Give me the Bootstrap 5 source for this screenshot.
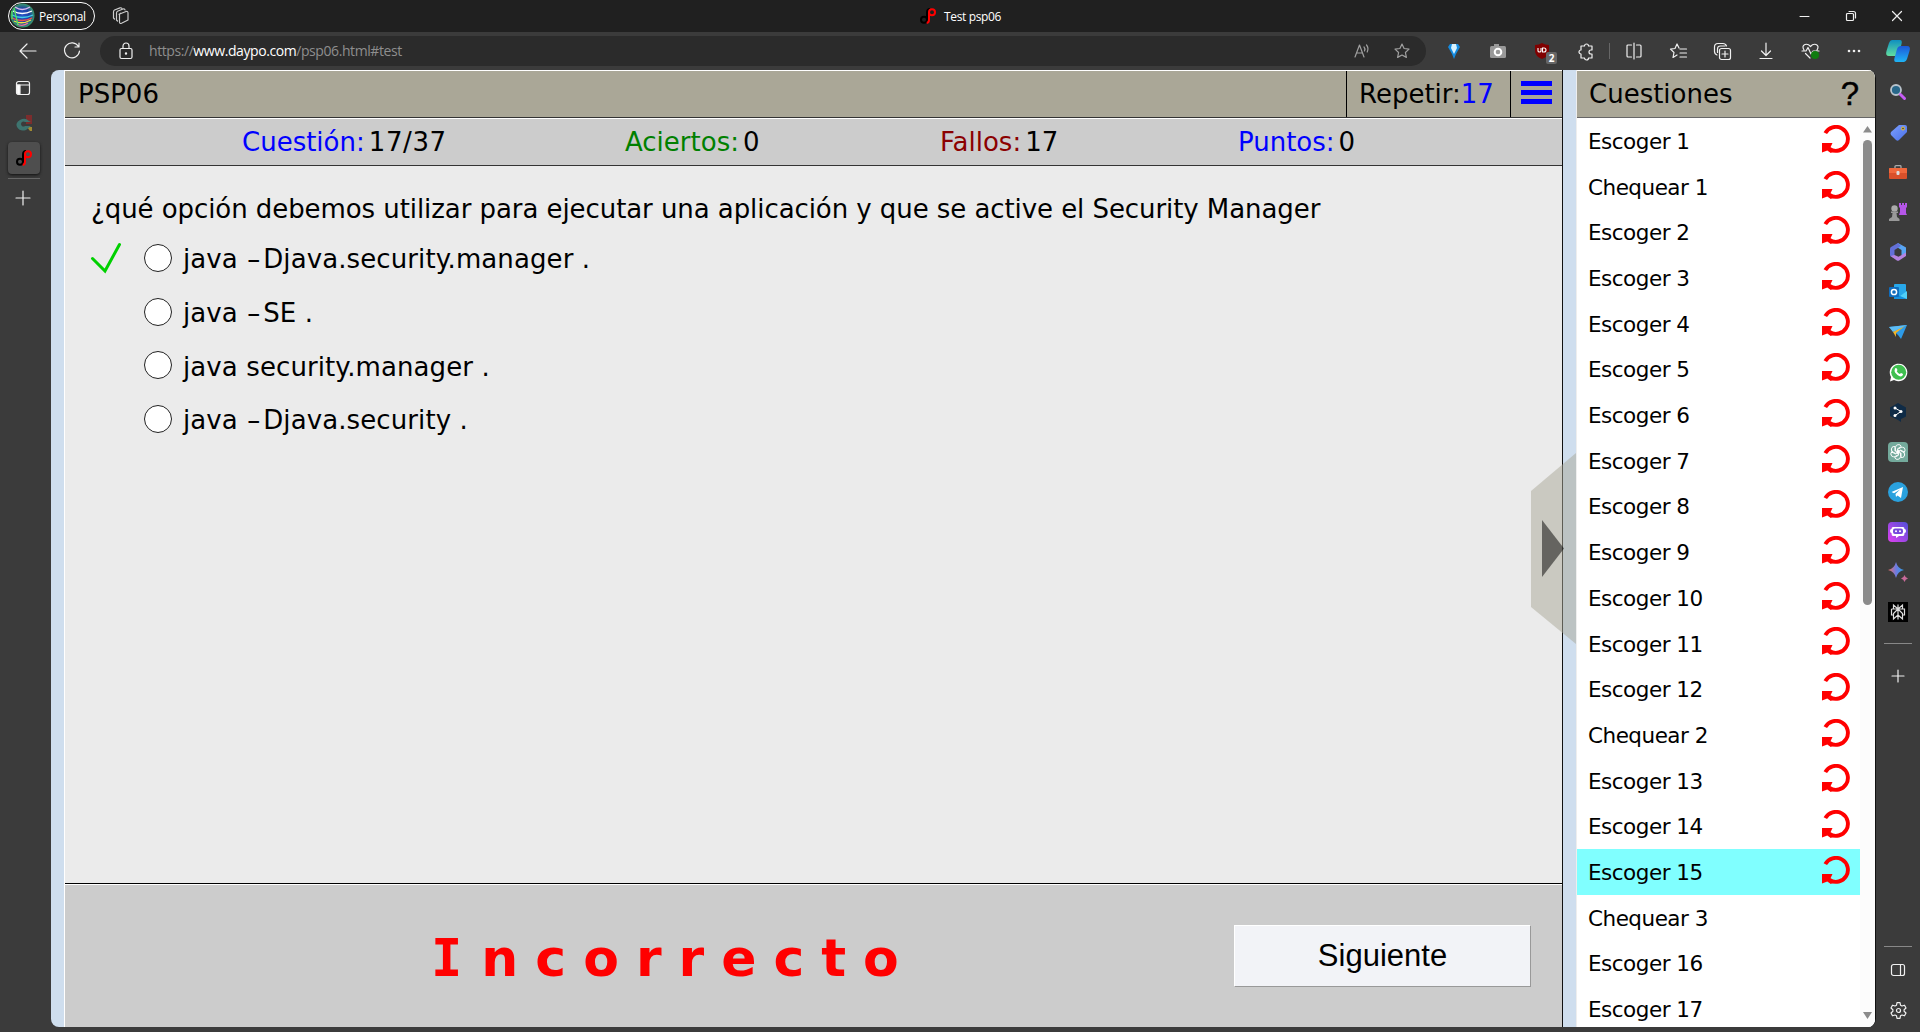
<!DOCTYPE html>
<html lang="es">
<head>
<meta charset="utf-8">
<title>Test psp06</title>
<link href="https://cdn.jsdelivr.net/npm/bootstrap@5.3.0/dist/css/bootstrap.min.css" rel="stylesheet">
<style>
html,body{height:100%}
body{background:#3b3b3b;overflow:hidden;font-family:"Open Sans","Noto Sans",sans-serif;color:#fff;line-height:1.2}
svg{display:block;flex:none;overflow:visible}
.ln{fill:none;stroke:#f0f0f0;stroke-width:1.2;stroke-linecap:round;stroke-linejoin:round}
.dim{stroke:#a0a0a0}
.titlebar{height:32px;background:#202020}
.pill{width:87px;height:28px;border:1px solid #fff;border-radius:14px;font-size:12px;letter-spacing:-.25px;margin:-1px 0 0 8px;padding-left:1px}
.tabname{font-size:12px;letter-spacing:-.35px;left:920px;top:8px;height:16px;gap:8px}
.tabname span{padding-top:2px}
.winbtn{width:46px;height:32px}
.toolbar{height:38px;padding-left:6px}
.slot{width:44px;height:38px}
.omni{width:1327px;height:30px;border-radius:15px;background:#2b2b2b;font-size:14px;margin-left:6px;padding-left:17px}
.omni .url{color:#8e8e8e;margin-left:14px;letter-spacing:-.42px}
.omni .url span{color:#fff}
.vsep{width:1px;height:16px;background:#666;margin:0 2px 0 1px}
.count{left:26px;top:20px;font-size:10px;font-weight:700;line-height:12px;background:#666;border-radius:2px;padding:0 2.500px}
.lefttabs{width:51px}
.lefttabs>div{width:32px;height:36px;margin-left:7px}
.lefttabs>.current{height:32px;margin-left:8px;background:#4e4e4e;border-radius:4px;box-shadow:0 1px 3px #111}
.lefttabs>.rule{height:1px;background:#666;margin:4px 0 1px 8px}
.page{width:1825px;height:957px;background:#cfdeee;border-radius:8px;overflow:hidden;border-right:1px solid #111;font-family:"DejaVu Sans",sans-serif;color:#000}
.quiz{width:1499px;margin-left:13px;border-left:1px solid #fff;border-right:1px solid #111;font-size:26px}
.tan{height:48px;background:#aaa797;border-top:1px solid #fff;border-bottom:1px solid #333;line-height:46px}
.blue{color:#00f}
.tan .cell{border-left:1px solid #000;flex:none;white-space:nowrap}
.bars i{display:block;width:31px;height:5px;background:#00f;margin-bottom:4px}
.stats{height:48px;background:#ccc;border-top:1px solid #fff;border-bottom:1px solid #333;line-height:47px;display:grid;grid-template-columns:383px 315px 298px auto;padding-left:177px}
.question{height:717px;background:#ebebeb;padding:27px 0 0 26px}
.question p{margin:0;line-height:32px;white-space:nowrap;letter-spacing:-.07px}
.opt{height:53.7px;letter-spacing:.1px;line-height:34px}
.opt .lbl{padding-top:3px}
.opt i{font-style:normal;letter-spacing:3px;margin-left:1px}
.opt .tick{width:30px}
.opt .radio{width:28px;height:28px;border:1px solid #222;border-radius:50%;background:#fff;margin:0 11px 0 23px}
.result{height:145px;background:#ccc;border-top:1px solid #000;box-shadow:inset 0 1px #fff}
.wrong{font-size:52px;font-weight:700;color:#f00;letter-spacing:17px;line-height:60px;padding-left:366px;width:1169px;margin-top:3px;white-space:nowrap}
.wrong span{font-family:"DejaVu Sans Mono",monospace;letter-spacing:19px}
.next{width:297px;height:62px;background:#f2f3f7;border:1px solid #999;border-top-color:#fff;border-left-color:#fff;border-radius:0;font:31px "Liberation Sans",sans-serif;color:#000;padding:0}
.list{width:299px;background:#fff;margin-left:13px;border-left:1px solid #eee}
.list .tan{font-size:26px;padding:0 16px 0 12px;border-bottom-color:#666}
.help{font:33px/46px "Liberation Sans",sans-serif;-webkit-text-stroke:.4px #000}
.rows{width:283px;font-size:21.500px;letter-spacing:-.5px}
.rows div{height:45.7px;padding:0 10px 0 11px}
.rows span{padding-top:2px}
.rows svg{margin-top:-4px}
.rows .sel{background:#80ffff}
.sbar{width:15px;background:#fcfcfc}
.thumb{width:9px;height:465px;background:#8b8b8b;border-radius:5px;margin-top:7px}
.handle{left:1531px;top:453px}
.side{width:44px;padding-top:2px}
.side>div{height:40px}
.side>hr{width:28px;margin:11px 0 12px;border-color:#888;opacity:1}
</style>
<script src="https://cdn.jsdelivr.net/npm/bootstrap@5.3.0/dist/js/bootstrap.bundle.min.js"></script>
</head>
<body>
<svg width="0" height="0" class="position-absolute">
<defs>
<radialGradient id="av"><stop offset="0" stop-color="#2a58c8"/><stop offset=".6" stop-color="#1d3fa0"/><stop offset="1" stop-color="#3a9a6a"/></radialGradient>
<linearGradient id="gc" x1="0" y1="0" x2="0" y2="1"><stop offset="0" stop-color="#0f8fc0"/><stop offset="1" stop-color="#62dfa0"/></linearGradient>
<linearGradient id="gd" x1="0" y1="0" x2="0" y2="1"><stop offset="0" stop-color="#1c57d8"/><stop offset="1" stop-color="#1fb4f4"/></linearGradient>
<linearGradient id="gp" x1="1" y1="0" x2="0" y2="1"><stop offset="0" stop-color="#5050d8"/><stop offset="1" stop-color="#e040f0"/></linearGradient>
<linearGradient id="gb" x1="0" y1="0" x2="1" y2="0"><stop offset="0" stop-color="#f07060"/><stop offset=".5" stop-color="#6f7ae0"/><stop offset="1" stop-color="#2ba0e8"/></linearGradient>
<linearGradient id="gt" x1="0" y1="0" x2="1" y2="1"><stop offset="0" stop-color="#7da0ff"/><stop offset="1" stop-color="#4a70e8"/></linearGradient>
<symbol id="dp" viewBox="0 0 16 16"><g fill="none" stroke-width="2"><circle cx="4" cy="11.7" r="3" stroke="#000"/><path d="M7 12V4.500Q7 1.200 10 1.100" stroke="#000"/><circle cx="12" cy="4.300" r="3" stroke="#f00"/><path d="M9 4v8q0 2.500-2.300 2.900" stroke="#f00"/></g></symbol>
<symbol id="redo" viewBox="0 0 28 28"><path d="M3.300 8.200A12 12 0 1 1 7.500 24" fill="none" stroke="#f00" stroke-width="3.900"/><path d="M0 18h10.500l-2 4.200 3.300 3.800-3 2-3.500-2.400L0 27.500z" fill="#f00"/></symbol>
</defs></svg>

<header class="titlebar d-flex align-items-center position-relative">
  <div class="pill d-flex align-items-center"><svg width="25" height="25" viewBox="0 0 25 25"><circle cx="12.500" cy="12.500" r="12" fill="url(#av)"/><g fill="none" stroke-width="1.300"><path d="M5 4q7 5 15 0" stroke="#d8b8f0"/><path d="M3 8q9 5 19 0" stroke="#fff"/><path d="M2 12q10 5 21 0" stroke="#40d0e8"/><path d="M2 15q10 5 20 0" stroke="#f05050"/><path d="M4 18q8 4 17-1" stroke="#f0e040"/><path d="M7 21q6 3 11-1" stroke="#f070a0"/><path d="M2 8v8M4 5l4 17" stroke="#50e060"/></g></svg><span class="ms-1 pt-1">Personal</span></div>
  <svg class="ln" style="stroke:#ccc;margin-left:17px" width="18" height="18" viewBox="0 0 18 18"><path d="M7 7.200 14 4.500q2-.5 2 1.500v7L9.500 16.300Q7.500 17 7.500 15V7.500q0-1 1-1.300M4.500 13V6q0-1.300 1-1.800L11 2q1.700-.5 2 1M1.500 11V5q0-1.500 1-2L8 .9q1.300-.4 1.900.4M1.500 11l1 1M4.500 13l1 1"/></svg>
  <div class="tabname d-flex align-items-center position-absolute"><svg width="16" height="16"><use href="#dp"/></svg><span>Test psp06</span></div>
  <div class="d-flex ms-auto">
    <div class="winbtn d-flex align-items-center justify-content-center"><svg class="ln" width="10" height="10"><path d="M0 5.500h9" stroke-width="1"/></svg></div>
    <div class="winbtn d-flex align-items-center justify-content-center"><svg class="ln" width="10" height="10"><rect x=".5" y="2.500" width="7" height="7" rx="1"/><path d="M3 .5h4.500q2 0 2 2V7"/></svg></div>
    <div class="winbtn d-flex align-items-center justify-content-center"><svg class="ln" width="10" height="10"><path d="m.5.5 9 9m0-9-9 9"/></svg></div>
  </div>
</header>

<nav class="toolbar d-flex align-items-center">
  <div class="slot d-flex align-items-center justify-content-center"><svg class="ln" width="18" height="16" viewBox="0 0 18 16"><path d="M17 8H1m7-7L1 8l7 7"/></svg></div>
  <div class="slot d-flex align-items-center justify-content-center"><svg class="ln" width="16" height="16" viewBox="0 0 16 16"><path d="M14.500 3.500A7.500 7.500 0 1 0 15.500 8M15 0v4h-4"/></svg></div>
  <div class="omni d-flex align-items-center">
    <svg class="ln" width="18" height="18" viewBox="0 0 18 18"><rect x="3" y="6.500" width="12" height="10" rx="1.500"/><path d="M6 6V4a3 3 0 0 1 6 0v2"/><circle cx="9" cy="11.500" r=".6" fill="#fff"/></svg>
    <div class="url">https://<span>www.daypo.com</span>/psp06.html#test</div>
    <div class="d-flex ms-auto me-1">
      <svg class="ln dim" width="16" height="16" viewBox="0 0 16 16"><path d="m1 14 4.500-12L10 14M2.500 10h6M10 4q1.500 1.500.5 4M12.500 2q2.500 3 .7 7"/></svg>
      <svg class="ln dim" style="margin:0 12px 0 24px" width="16" height="16" viewBox="0 0 16 16"><path d="m8 1 2.100 4.500 4.900.6-3.600 3.400 1 4.900L8 12l-4.400 2.400 1-4.900L1 6.100l4.900-.6z"/></svg>
    </div>
  </div>
  <div class="slot d-flex align-items-center justify-content-center" style="margin-left:6px"><svg width="12" height="16" viewBox="0 0 12 16"><path d="M2 1h8l2 3-4 7-2 5-2-5-4-7z" fill="#148be0"/><path d="M4 1h4l1 4-3 6-3-6z" fill="#d6f2ff"/></svg></div>
  <div class="slot d-flex align-items-center justify-content-center"><svg width="16" height="14" viewBox="0 0 16 14"><rect y="2" width="16" height="12" rx="1.500" fill="#999"/><path d="M4 2V0h5v2" fill="#999"/><circle cx="8" cy="8" r="3.300" fill="#999" stroke="#fff" stroke-width="2"/></svg></div>
  <div class="slot d-flex align-items-center justify-content-center position-relative"><svg width="16" height="16" viewBox="0 0 16 16"><path d="M8 0q3 2 7 2v6q0 5-7 8-7-3-7-8V2q4 0 7-2z" fill="#800000"/><path d="M4 5v3q0 1 1.500 1T7 8V5M8.500 5v4H10q2 0 2-2t-2-2z" fill="none" stroke="#fff" stroke-width="1.100"/></svg><span class="count position-absolute">2</span></div>
  <div class="slot d-flex align-items-center justify-content-center"><svg class="ln" width="16" height="16" viewBox="0 0 16 16"><path d="M5 3h1.500a2 2 0 0 1 4 0H14v4h-1a2 2 0 0 0 0 4h1v4h-3.500a2 2 0 0 1-4 0H3v-4a2 2 0 0 1 0-4V3z"/></svg></div>
  <div class="vsep"></div>
  <div class="slot d-flex align-items-center justify-content-center"><svg class="ln" width="16" height="16" viewBox="0 0 16 16"><path d="M8 0v16M5.500 2H2Q1 2 1 3v10q0 1 1 1h3.500M10.500 2H14q1 0 1 1v10q0 1-1 1h-3.500"/></svg></div>
  <div class="slot d-flex align-items-center justify-content-center"><svg class="ln" width="17" height="16" viewBox="0 0 17 16"><path d="M9 5 7 1 5 5.500l-4.500.6L4 9.500l-1 5L7 12M10 6h6.500M10 10h6.500M10 14h6.500"/></svg></div>
  <div class="slot d-flex align-items-center justify-content-center"><svg class="ln" width="17" height="17" viewBox="0 0 17 17"><rect x="5.500" y="5.500" width="11" height="11" rx="2"/><path d="M11 8v6M8 11h6M3 12Q.5 11 .5 8.500V4Q.5.500 4 .5h5q2.500 0 3.500 2.500M3.500 9.500V6q0-3 3-3H11"/></svg></div>
  <div class="slot d-flex align-items-center justify-content-center"><svg class="ln" width="14" height="16" viewBox="0 0 14 16"><path d="M7 0v12M2.500 8 7 12.500 11.500 8M1 15.500h12"/></svg></div>
  <div class="slot d-flex align-items-center justify-content-center"><svg class="ln" width="17" height="16" viewBox="0 0 17 16"><path d="M2 7Q-.5 3 3 1.500 6 .5 8.500 3.500 11 .5 14 1.500 17.500 3 15 7M0 8h4l2-3.500L9 11l2-3h6M3.500 10.500 8 15"/><circle cx="13" cy="12" r="4" fill="#107c10" stroke="none"/></svg></div>
  <div class="slot d-flex align-items-center justify-content-center"><svg width="14" height="4" viewBox="0 0 14 4" fill="#eee"><circle cx="2" cy="2" r="1.300"/><circle cx="7" cy="2" r="1.300"/><circle cx="12" cy="2" r="1.300"/></svg></div>
  <div class="slot d-flex align-items-center justify-content-center flex-shrink-1"><svg width="24" height="22" viewBox="0 0 24 22"><path d="M6 0h8q2.500 0 1.500 4l-2.500 9q-1 3-4 3H3q-4 0-2.500-5L3 3Q4 0 6 0z" fill="url(#gc)"/><path d="M15 6h6q4 0 2.500 5L21 19q-1 3-3 3h-8q-2.500 0-1.500-4l2.500-9q1-3 4-3z" fill="url(#gd)"/></svg></div>
</nav>

<div class="d-flex">
  <aside class="lefttabs">
    <div class="d-flex align-items-center justify-content-center"><svg class="ln" width="14" height="14" viewBox="0 0 14 14"><rect x=".5" y=".5" width="13" height="13" rx="2"/><path d="M1 4h12"/><path d="M1 4h3v9H2q-1 0-1-1z" fill="#fff"/></svg></div>
    <div class="d-flex align-items-center justify-content-center"><svg width="16" height="16" viewBox="0 0 16 16" style="margin:-3px 0 0 2px"><path d="M10 0h6v9h-6z" fill="#7c2d2d"/><path d="M11 12h5v4h-2z" fill="#a08a32"/><path d="M13 6Q9 2 4 5-1 8 1 12q3 5 9 3l5-4H9a2.500 2.500 0 1 1 0-4h6z" fill="#3d746f"/></svg></div>
    <div class="current d-flex align-items-center justify-content-center"><svg width="16" height="16"><use href="#dp"/></svg></div>
    <div class="rule"></div>
    <div class="d-flex align-items-center justify-content-center"><svg class="ln" width="14" height="14"><path d="M7 0v14M0 7h14"/></svg></div>
  </aside>

  <main class="page d-flex">
    <section class="quiz">
      <div class="tan d-flex">
        <div class="flex-grow-1" style="padding-left:13px">PSP06</div>
        <div class="cell" style="width:164px;padding-left:12px">Repetir:<span class="blue">17</span></div>
        <div class="cell bars" style="width:52px;padding:10px 0 0 10px"><i></i><i></i><i></i></div>
      </div>
      <div class="stats">
        <div><span class="blue">Cuestión:</span><span class="ms-1" style="letter-spacing:.6px">17/37</span></div>
        <div><span style="color:#008000">Aciertos:</span><span class="ms-1">0</span></div>
        <div><span style="color:#8b0000">Fallos:</span><span class="ms-1">17</span></div>
        <div><span class="blue">Puntos:</span><span class="ms-1">0</span></div>
      </div>
      <div class="question">
        <p>¿qué opción debemos utilizar para ejecutar una aplicación y que se active el Security Manager</p>
        <div style="padding-top:6px">
          <div class="opt d-flex align-items-center"><div class="tick"><svg width="30" height="30" viewBox="0 0 30 30"><path d="m1.500 15.500 12.500 12.500L28.500 1.500" fill="none" stroke="#00d000" stroke-width="3" stroke-linecap="round"/></svg></div><div class="radio"></div><div class="lbl">java <i>–</i>Djava.security.manager .</div></div>
          <div class="opt d-flex align-items-center"><div class="tick"></div><div class="radio"></div><div class="lbl">java <i>–</i>SE .</div></div>
          <div class="opt d-flex align-items-center"><div class="tick"></div><div class="radio"></div><div class="lbl">java security.manager .</div></div>
          <div class="opt d-flex align-items-center"><div class="tick"></div><div class="radio"></div><div class="lbl">java <i>–</i>Djava.security .</div></div>
        </div>
      </div>
      <div class="result d-flex align-items-center">
        <div class="wrong"><span>I</span>ncorrecto</div>
        <button class="btn next">Siguiente</button>
      </div>
    </section>
    <section class="list">
      <div class="tan d-flex justify-content-between"><span>Cuestiones</span><span class="help">?</span></div>
      <div class="d-flex" style="height:909px">
        <div class="rows" id="rows"></div>
        <div class="sbar d-flex flex-column align-items-center">
          <svg width="9" height="7" style="margin-top:8px"><path d="M4.500 0 9 6.500H0z" fill="#8b8b8b"/></svg>
          <div class="thumb"></div>
          <svg class="mt-auto" style="margin-bottom:8px" width="9" height="7"><path d="M4.500 7 0 0h9z" fill="#8b8b8b"/></svg>
        </div>
      </div>
    </section>
  </main>

  <aside class="side d-flex flex-column align-items-center">
    <div class="d-flex align-items-center"><svg width="16" height="16" viewBox="0 0 16 16"><circle cx="6" cy="6" r="5" fill="#28678a" stroke="#b9c3cc" stroke-width="1.800"/><path d="m10.500 10.500 4 4" stroke="#c65cf5" stroke-width="3" stroke-linecap="round"/></svg></div>
    <div class="d-flex align-items-center"><svg width="17" height="17" viewBox="0 0 17 17"><path d="M9 1h6q2 0 2 2v5l-8 8q-1.500 1.300-3 0L1 11q-1-1.500 0-3z" fill="url(#gt)"/><circle cx="13" cy="4.500" r="1.500" fill="#555" stroke="#f0c430"/></svg></div>
    <div class="d-flex align-items-center"><svg width="18" height="14" viewBox="0 0 18 14"><path d="M6 3V1.500Q6 .7 7 .7h4q1 0 1 .8V3" fill="none" stroke="#aaa" stroke-width="1.300"/><rect y="3" width="18" height="11" rx="1" fill="#d9502a"/><path d="M0 4q0-1 1-1h16q1 0 1 1v4H0z" fill="#f0683c"/><rect x="7.500" y="6" width="3" height="4" rx="1" fill="#ddd"/></svg></div>
    <div class="d-flex align-items-center"><svg width="18" height="18" viewBox="0 0 18 18"><path d="M10 0h2v2h1V0h2v2h1V0h2v4l-1 1v5l1 2h-8l1-3V5l-1-1z" fill="#b556e8"/><circle cx="5.500" cy="5.500" r="3.200" fill="#aaa"/><path d="M2 8.500h7v1.500H7.500L8 14l2.500 2v2H0v-2l3-2 .5-4H2z" fill="#999"/></svg></div>
    <div class="d-flex align-items-center"><svg width="18" height="18" viewBox="0 0 18 18"><path d="m9 0 8 4.500v6q0 2-2 3L12.500 12V7L7 3.500z" fill="#58a6f4"/><path d="M9 0 2 4Q1 4.500 1 6v6q0 1 1 1.500l3.500 2V7L12 3z" fill="#6370d8"/><path d="m1.500 13 6 4.300q1.500 1 3 0L17 13V9.500l-7.500 4.300L5.500 12z" fill="#b583df"/></svg></div>
    <div class="d-flex align-items-center"><svg width="18" height="16" viewBox="0 0 18 16"><rect x="5" width="12" height="15" rx="1" fill="#28a8ea"/><path d="m5 8 6 4 7-4v7H5z" fill="#1490df"/><path d="m11 12 7-5v8z" fill="#50d0f8"/><rect y="3" width="10" height="10" rx="1" fill="#0f6cbd"/><circle cx="5" cy="8" r="2.600" fill="none" stroke="#fff" stroke-width="1.500"/></svg></div>
    <div class="d-flex align-items-center"><svg width="18" height="14" viewBox="0 0 18 14"><path d="M0 2 18 0l-6 14-3-4z" fill="#2d9be8"/><path d="m0 2 18-2L4 7z" fill="#5dbdf5"/><path d="M4 7 16 1 7 8v4z" fill="#f0b429"/></svg></div>
    <div class="d-flex align-items-center"><svg width="19" height="19" viewBox="0 0 19 19"><path d="M1 18.500 2 14A8.800 8.800 0 1 1 5 17z" fill="#fff"/><circle cx="9.700" cy="9.200" r="7.500" fill="#3fbf50"/><path d="M6 5.500q1.500-1.500 2.500 1.500l-.7 1.300q1 2 3 2.800l1.200-1q3 1 1.500 2.400-2 2-5-.5T5.500 8z" fill="#fff"/></svg></div>
    <div class="d-flex align-items-center"><svg width="16" height="19" viewBox="0 0 16 19"><path d="m8 0 8 4.500v9L11 16v3l-3-2-8-4V4.500z" fill="#0f2b46"/><path d="m5 5 6 3.500-6 4" fill="none" stroke="#fff"/><g fill="#fff"><circle cx="5" cy="5" r="1.500"/><circle cx="11" cy="8.500" r="1.500"/><circle cx="5" cy="12.500" r="1.500"/></g></svg></div>
    <div class="d-flex align-items-center"><svg width="20" height="20" viewBox="0 0 20 20"><path d="M4 0h12q4 0 4 4v16H4q-4 0-4-4V4q0-4 4-4z" fill="#74aa9c"/><g fill="none" stroke="#fff" stroke-width=".9"><path id="k" d="M7.500 9V5.500a3 3 0 0 1 5.800-1L9.500 6.800V12"/><use href="#k" transform="rotate(60 10 10)"/><use href="#k" transform="rotate(120 10 10)"/><use href="#k" transform="rotate(180 10 10)"/><use href="#k" transform="rotate(240 10 10)"/><use href="#k" transform="rotate(300 10 10)"/></g></svg></div>
    <div class="d-flex align-items-center"><svg width="20" height="20" viewBox="0 0 20 20"><circle cx="10" cy="10" r="10" fill="#2aa1de"/><path d="m3.500 10 11.500-5-2 11-3.500-2.500L8 15l-.5-3L12 7.500l-6 3.700z" fill="#fff"/></svg></div>
    <div class="d-flex align-items-center"><svg width="20" height="20" viewBox="0 0 20 20"><rect width="20" height="20" rx="4" fill="url(#gp)"/><path d="M5 5h10q1.500 0 1.500 2 1.500 0 1.500 2t-1.500 2q0 3-1.500 3h-4l-3 2v-2H5q-1.500 0-1.500-3Q2 11 2 9t1.500-2Q3.500 5 5 5z" fill="#fff"/><rect x="5" y="6.500" width="10" height="5.500" rx="2" fill="#7648dc"/><circle cx="8" cy="9.200" r="1" fill="#fff"/><circle cx="12" cy="9.200" r="1" fill="#fff"/></svg></div>
    <div class="d-flex align-items-center"><svg width="20" height="20" viewBox="0 0 20 20"><path d="M8 0q1.500 6.500 8 8-6.500 1.500-8 8-1.500-6.500-8-8 6.500-1.500 8-8z" fill="url(#gb)"/><path d="M16.500 13q.7 2.800 3.500 3.500-2.800.7-3.500 3.500-.7-2.800-3.500-3.500 2.800-.7 3.500-3.500z" fill="#c96a9a"/></svg></div>
    <div class="d-flex align-items-center"><svg width="20" height="20" viewBox="0 0 20 20"><rect width="20" height="20" fill="#000"/><g fill="none" stroke="#ddd" stroke-width="1.200"><path d="M10 2.500v15M10 7 5.500 3v4M10 7l4.500-4v4M3.500 7h13v6h-2M3.500 7v6h2M10 7l-4.500 4.500V17l4.500-4M10 7l4.500 4.500V17L10 13"/></g></svg></div>
    <hr>
    <div class="d-flex align-items-center"><svg class="ln" width="12" height="12"><path d="M6 0v12M0 6h12"/></svg></div>
    <hr style="margin-top:250px;margin-bottom:3px">
    <div class="d-flex align-items-center"><svg class="ln" width="14" height="12"><rect x=".5" y=".5" width="13" height="11" rx="2"/><path d="M9.500 1v10"/></svg></div>
    <div class="d-flex align-items-center"><svg class="ln" width="17" height="17" viewBox="0 0 17 17"><path d="m7 .7-.5 2.500L5 4 2.500 3.200 1 6l1.900 1.700v1.600L1 11l1.500 2.800L5 13l1.500.8.500 2.500h3l.5-2.500L12 13l2.500.8L16 11l-1.900-1.700V7.700L16 6l-1.500-2.800L12 4l-1.500-.8L10 .7z"/><circle cx="8.500" cy="8.500" r="2"/></svg></div>
  </aside>
</div>

<svg class="handle position-absolute" width="45" height="191"><path d="M0 38 45 0v191L0 154z" fill="#aaa797" fill-opacity=".5"/><path d="M11 67v57l22-28.500z" fill="#000" fill-opacity=".5"/></svg>

<script>
const names = ['Escoger 1','Chequear 1'];
for (let i = 2; i <= 12; i++) names.push('Escoger ' + i);
names.push('Chequear 2','Escoger 13','Escoger 14','Escoger 15','Chequear 3','Escoger 16','Escoger 17');
document.getElementById('rows').innerHTML = names.map((n, i) =>
  `<div class="d-flex align-items-center justify-content-between${i === 16 ? ' sel' : ''}"><span>${n}</span>${i < 17 ? '<svg width="28" height="28"><use href="#redo"/></svg>' : ''}</div>`).join('');
</script>
</body>
</html>
